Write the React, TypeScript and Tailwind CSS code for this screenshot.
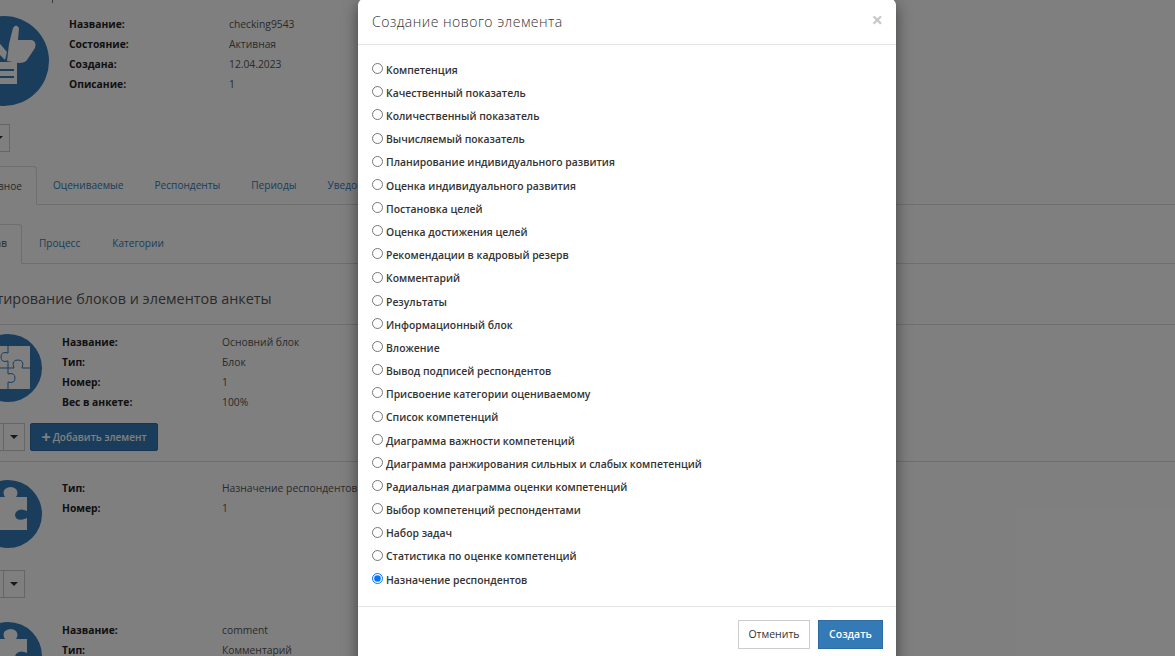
const FONT = "[font-family:'Open_Sans','Liberation_Sans',sans-serif]";

const ELEMENTS = [
  "Компетенция",
  "Качественный показатель",
  "Количественный показатель",
  "Вычисляемый показатель",
  "Планирование индивидуального развития",
  "Оценка индивидуального развития",
  "Постановка целей",
  "Оценка достижения целей",
  "Рекомендации в кадровый резерв",
  "Комментарий",
  "Результаты",
  "Информационный блок",
  "Вложение",
  "Вывод подписей респондентов",
  "Присвоение категории оцениваемому",
  "Список компетенций",
  "Диаграмма важности компетенций",
  "Диаграмма ранжирования сильных и слабых компетенций",
  "Радиальная диаграмма оценки компетенций",
  "Выбор компетенций респондентами",
  "Набор задач",
  "Статистика по оценке компетенций",
  "Назначение респондентов",
];

function InfoRows({ rows }: { rows: [string, string][] }) {
  return (
    <div className="flex flex-col">
      {rows.map(([label, value]) => (
        <div key={label} className="flex h-5 items-center text-[10.3px]">
          <span className="w-40 font-bold text-[#222]">{label}</span>
          <span className="text-[#555]">{value}</span>
        </div>
      ))}
    </div>
  );
}

function ThumbIcon() {
  return (
    <svg viewBox="0 0 90 90" className="h-[90px] w-[90px] shrink-0">
      <circle cx="45" cy="45" r="45" fill="#337ab7" />
      <path
        d="M50 28 L54 12 Q57 7 60 12 L59 24 L73 24 Q78 26 76 32 L68 44 Q66 47 60 47 L48 45 Z"
        fill="#fff"
      />
      <path d="M36 22 L48 36 L46 44 L32 30 Z" fill="#fff" />
      <path d="M28 46 H58 V68 H28 Z" fill="#fff" />
      <path d="M28 53 H55 V55 H28 Z M28 60 H55 V62 H28 Z" fill="#337ab7" />
    </svg>
  );
}

function PuzzleIcon({ split }: { split?: boolean }) {
  return (
    <svg viewBox="0 0 68 68" className="h-[68px] w-[68px] shrink-0">
      <circle cx="34" cy="34" r="34" fill="#337ab7" />
      {split ? (
        <>
          <path d="M12 12 H56 V55 H12 Z" fill="#fff" />
          <path
            d="M34 12 V19 Q27 17 27 23 Q27 29 34 27 V40 Q41 38 41 44 Q41 50 34 48 V55 M12 34 H40 Q37 26 44 26 Q51 26 48 34 H56"
            fill="none"
            stroke="#337ab7"
            strokeWidth="1"
          />
        </>
      ) : (
        <path
          d="M5 17 H31 Q28 12 31 9 Q37 5 42 9 Q45 13 42 17 H53 V31 Q47 28 43 31 Q39 35 43 39 Q47 41 53 38 V50 H5 Z"
          fill="#fff"
        />
      )}
    </svg>
  );
}

function CaretButton({ className }: { className: string }) {
  return (
    <div className={`flex h-7 items-center justify-center border border-[#ccc] bg-white ${className}`}>
      <span className="h-0 w-0 border-x-[4px] border-t-[4px] border-x-transparent border-t-[#333]" />
    </div>
  );
}

function SplitCaret() {
  return (
    <div className="flex">
      <div className="h-7 w-[3px] border-y border-[#ccc] bg-white" />
      <CaretButton className="w-[22px]" />
    </div>
  );
}

function Tab({ label, active, className }: { label: string; active?: boolean; className?: string }) {
  return (
    <span
      className={`flex items-center whitespace-nowrap px-[15px] text-[10.1px] ${
        active
          ? "rounded-t border border-b-white border-[#ddd] bg-white text-[#555]"
          : "text-[#337ab7]"
      } ${className ?? ""}`}
    >
      {label}
    </span>
  );
}

function BackgroundPage() {
  return (
    <div className="flex w-full flex-col bg-white text-[#333]">
      <div className="-mb-[3px] ml-[52px] h-[3px] w-px bg-[#777]" />
      <div className="flex">
        <div className="-ml-[41px] mt-4">
          <ThumbIcon />
        </div>
        <div className="ml-5 mt-[15px]">
          <InfoRows
            rows={[
              ["Название:", "checking9543"],
              ["Состояние:", "Активная"],
              ["Создана:", "12.04.2023"],
              ["Описание:", "1"],
            ]}
          />
        </div>
      </div>
      <CaretButton className="mt-[18px] -ml-[13px] w-[23px]" />

      <div className="mt-[14px] flex h-[39px] border-b border-[#ddd]">
        <Tab label="Основное" active className="-ml-[40px] -mb-px w-[77px] justify-end pr-[14px] pt-[2px]" />
        <Tab label="Оцениваемые" className="ml-px pt-[2px]" />
        <Tab label="Респонденты" className="ml-px pt-[2px]" />
        <Tab label="Периоды" className="ml-px pt-[2px]" />
        <Tab label="Уведомления" className="ml-px pt-[2px]" />
      </div>

      <div className="mt-[19px] flex h-[40px] border-b border-[#ddd]">
        <Tab label="Состав" active className="-ml-[30px] -mb-px w-[52px] justify-end pr-[14px]" />
        <Tab label="Процесс" className="ml-[2px]" />
        <Tab label="Категории" className="ml-[2px]" />
      </div>

      <h2 className="-ml-[44px] mt-[23px] h-[24px] whitespace-nowrap text-[14.4px] font-normal leading-[24px] text-[#555]">
        Редактирование блоков и элементов анкеты
      </h2>
      <div className="mt-[13px] border-b border-[#ddd]" />

      <div className="mt-[9px] flex">
        <div className="-ml-[26px]">
          <PuzzleIcon split />
        </div>
        <div className="-mt-px ml-5">
          <InfoRows
            rows={[
              ["Название:", "Основний блок"],
              ["Тип:", "Блок"],
              ["Номер:", "1"],
              ["Вес в анкете:", "100%"],
            ]}
          />
        </div>
      </div>
      <div className="mt-[10px] flex items-center">
        <SplitCaret />
        <div className="ml-[5px] flex h-7 w-[128px] items-center justify-center gap-[2px] rounded-[2px] border border-[#2e6da4] bg-[#337ab7] text-[10px] font-semibold text-white">
          <span className="text-[16px] font-bold leading-none">+</span>
          Добавить элемент
        </div>
      </div>
      <div className="mt-[10px] border-b border-[#ddd]" />

      <div className="mt-[18px] flex">
        <div className="-ml-[26px]">
          <PuzzleIcon />
        </div>
        <div className="-mt-px ml-5">
          <InfoRows
            rows={[
              ["Тип:", "Назначение респондентов"],
              ["Номер:", "1"],
            ]}
          />
        </div>
      </div>
      <div className="mt-[22px]">
        <SplitCaret />
      </div>

      <div className="mt-[24px] flex">
        <div className="-ml-[26px]">
          <PuzzleIcon />
        </div>
        <div className="-mt-px ml-5">
          <InfoRows
            rows={[
              ["Название:", "comment"],
              ["Тип:", "Комментарий"],
            ]}
          />
        </div>
      </div>
    </div>
  );
}

function CreateElementModal() {
  return (
    <div className="absolute inset-0 bg-black/50">
      <div className="absolute left-[358px] top-[-1px] w-[538px] rounded-md bg-white shadow-[0_5px_15px_rgba(0,0,0,0.5)]">
        <div className="flex h-[46px] items-center justify-between border-b border-[#e5e5e5] pl-[14px] pr-[13px]">
          <span className="text-[14px] font-light tracking-[0.5px] text-[#333]">Создание нового элемента</span>
          <span className="-mt-1 text-[20px] font-bold leading-none text-[#c8c8c8]">×</span>
        </div>
        <div className="px-[14px] pb-[14px] pt-[14px]">
          {ELEMENTS.map((name) => (
            <label key={name} className="flex h-[23.18px] items-center">
              <input
                type="radio"
                name="element"
                defaultChecked={name === "Назначение респондентов"}
                className="mb-[4px] ml-0 mr-[3px] h-[11px] w-[11px]"
              />
              <span className="text-[10.4px] font-semibold text-[#333]">{name}</span>
            </label>
          ))}
        </div>
        <div className="flex justify-end gap-2 border-t border-[#e5e5e5] pb-[60px] pr-[13px] pt-[13px]">
          <button
            type="button"
            className="h-[29px] w-[72px] border border-[#ccc] bg-white text-[10.5px] font-normal text-[#333]"
          >
            Отменить
          </button>
          <button
            type="button"
            className="h-[29px] w-[65px] border border-[#2e6da4] bg-[#337ab7] text-[10.5px] font-semibold text-white"
          >
            Создать
          </button>
        </div>
      </div>
    </div>
  );
}

export default function App() {
  return (
    <div className={`relative h-[656px] w-[1175px] overflow-hidden ${FONT}`}>
      <BackgroundPage />
      <CreateElementModal />
    </div>
  );
}
